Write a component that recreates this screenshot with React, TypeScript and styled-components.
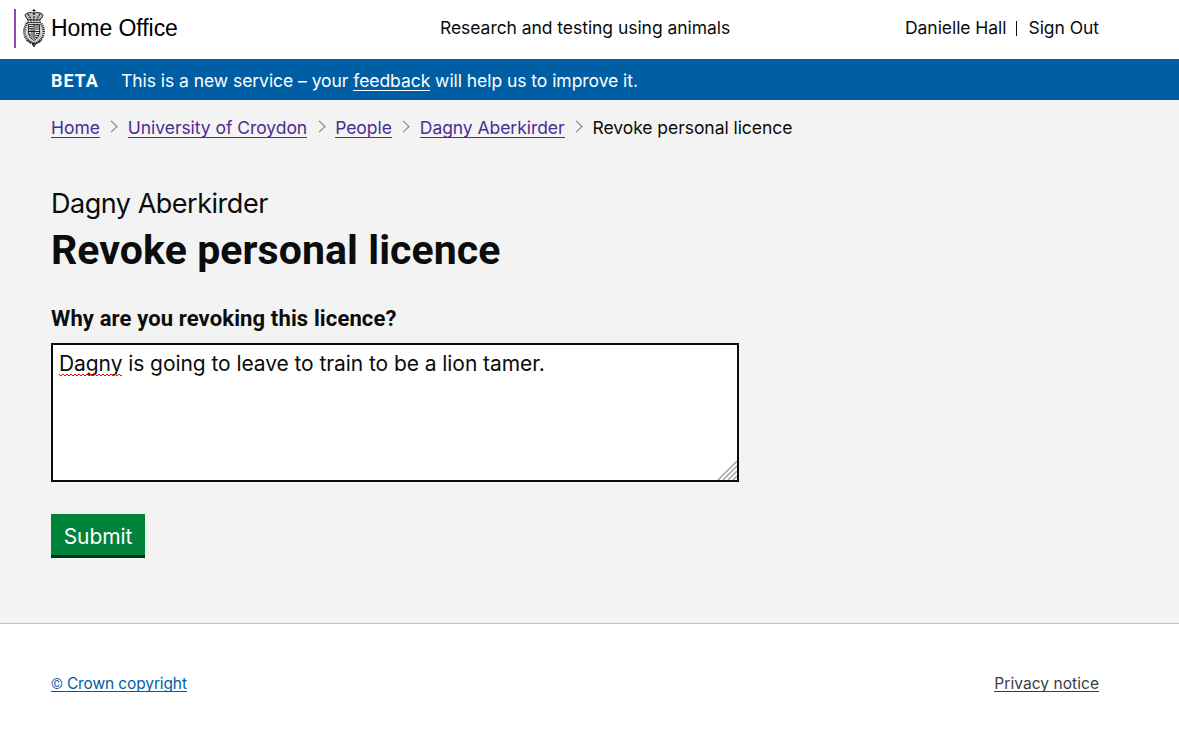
import React from 'react';
import styled, { createGlobalStyle } from 'styled-components';

const GlobalStyle = createGlobalStyle`
  * { box-sizing: border-box; }
  body { margin: 0; background: #fff; color: #0b0c0c; font-family: Inter, "Liberation Sans", sans-serif; }
`;

const Page = styled.div`
  height: 755px;
  display: flex;
  flex-direction: column;
`;

const Header = styled.header`
  height: 59px;
  display: grid;
  grid-template-columns: 440px 1fr auto;
  padding-right: 80px;
  font-size: 17.5px;
  letter-spacing: -0.05px;
  line-height: 56px;
  white-space: nowrap;
`;

const Brand = styled.div`
  display: flex;
  padding: 9px 0 0 14px;
`;

const BrandBar = styled.span`
  width: 2px;
  height: 39px;
  background: #8f4ba8;
`;

const Crest = styled.svg`
  width: 22px;
  height: 38px;
  margin-left: 7px;
`;

const BrandName = styled.span`
  margin-left: 6px;
  font-family: "Liberation Sans", Arial, sans-serif;
  font-size: 23px;
  letter-spacing: -0.05px;
  line-height: 39px;
  color: #000;
`;

const Account = styled.div`
  display: flex;
`;

const Divider = styled.span`
  width: 1px;
  height: 15px;
  margin: 21px 11px 0 10px;
  background: #0b0c0c;
`;

const PhaseBanner = styled.div`
  height: 41px;
  display: flex;
  padding-left: 51px;
  background: #005ea5;
  color: #fff;
  font-size: 17.5px;
  letter-spacing: -0.05px;
  line-height: 44px;
  white-space: nowrap;
`;

const Phase = styled.strong`
  width: 70px;
  font-family: Roboto, sans-serif;
  font-size: 18px;
  font-weight: 700;
  letter-spacing: 0.9px;
`;

const Link = styled.a<{ $color: string }>`
  color: ${(p) => p.$color};
  text-decoration: none;
  display: inline-block;
  line-height: 19px;
  border-bottom: 1px solid ${(p) => p.$color};
`;

const FooterLink = styled(Link)<{ $tracking: number }>`
  height: 18px;
  letter-spacing: ${(p) => p.$tracking}px;
`;

const CopyrightSign = styled.span`
  font-family: Roboto, sans-serif;
  font-size: 15px;
`;

const Main = styled.main`
  height: 524px;
  padding: 18px 0 0 51px;
  background: #f3f3f3;
  border-bottom: 1px solid #bfc1c3;
`;

const Breadcrumbs = styled.nav`
  height: 20px;
  display: flex;
  font-size: 17.5px;
  letter-spacing: -0.05px;
  line-height: 19px;
  white-space: nowrap;
`;

const Chevron = styled.svg`
  width: 8px;
  height: 13px;
  margin: 2px 9.500px 0 10.500px;
`;

const Caption = styled.div`
  margin-top: 46px;
  font-size: 27px;
  font-weight: 380;
  letter-spacing: -0.48px;
  line-height: 40px;
`;

const Title = styled.h1`
  margin: 0;
  height: 52px;
  font-family: Roboto, sans-serif;
  font-size: 41px;
  font-weight: 700;
  letter-spacing: 0.08px;
  line-height: 52px;
`;

const Label = styled.label`
  display: block;
  margin-top: 31px;
  font-family: Roboto, sans-serif;
  font-size: 22px;
  font-weight: 700;
  letter-spacing: 0.13px;
  line-height: 24px;
`;

const Answer = styled.div`
  width: 688px;
  height: 139px;
  margin-top: 12px;
  padding: 5px 6px;
  display: flex;
  justify-content: space-between;
  border: 2px solid #0b0c0c;
  background: #fff;
  font-size: 21px;
  letter-spacing: -0.07px;
  line-height: 28px;
`;

const Misspelt = styled.span`
  position: relative;
`;

const Squiggle = styled.svg`
  position: absolute;
  left: 0;
  bottom: -1px;
  width: 63px;
  height: 4px;
`;

const Grip = styled.svg`
  align-self: flex-end;
  width: 20px;
  height: 20px;
  margin: 0 -6px -5px 0;
`;

const Submit = styled.button`
  display: block;
  width: 94px;
  height: 44px;
  margin-top: 32px;
  padding: 4px 0 0;
  border: 0;
  border-bottom: 3px solid #003618;
  background: #00823b;
  color: #fff;
  font: 400 21px/37px Inter, sans-serif;
  letter-spacing: -0.1px;
`;

const Footer = styled.footer`
  display: flex;
  justify-content: space-between;
  padding: 50px 80px 0 51px;
  font-size: 15.5px;
  white-space: nowrap;
`;

const crumbs = ['Home', 'University of Croydon', 'People', 'Dagny Aberkirder'];

function RoyalCrest() {
  return (
    <Crest viewBox="0 0 22 38" fill="none" stroke="#202020">
      <path d="M11 0v4M9.500 1.500h3" strokeWidth="1.2" />
      <path d="M3.500 9Q0 5 5 4q4-2 6 1q2-3 6-1q5 1 1.500 5l-1.500 2H5z" fill="#bbb" strokeWidth="1" />
      <path d="M5 5l3 5M11 4v6M17 5l-3 5M4 11h14" strokeWidth="1.2" strokeDasharray="2 .9" />
      <path d="M4 13.500h14M5 12v3M8 12v3M11 12v3M14 12v3M17 12v3" strokeWidth=".8" />
      <path d="M4 14Q-1 22 3 29q3 4 8 6q5-2 8-6q4-7-1-15" fill="#d0d0d0" strokeWidth="2.400" strokeDasharray="1.100 .9" />
      <path d="M5.500 15.500h11v9q-1 5-5.500 7q-4.500-2-5.500-7z" fill="#e8e8e8" strokeWidth=".9" />
      <path d="M11 15v15M5 22.500h12" strokeWidth="1.1" />
      <path d="M6 17.500h4M6 19.500h4M7 21h3M13 16v5M15 16v5M7 24v3M9 23v6M13 24.500h3M12 26.500h4M12 28.500h2" strokeWidth=".9" />
      <path d="M3.500 31q4 3 7.500 3.500t7.500-3.500M9 35.500h4M10 37h2" strokeWidth="1.5" strokeDasharray="2.500 .7" />
    </Crest>
  );
}

export default function App() {
  return (
    <Page>
      <GlobalStyle />
      <Header>
        <Brand>
          <BrandBar />
          <RoyalCrest />
          <BrandName>Home Office</BrandName>
        </Brand>
        <span>Research and testing using animals</span>
        <Account>
          <span>Danielle Hall</span>
          <Divider />
          <span>Sign Out</span>
        </Account>
      </Header>
      <PhaseBanner>
        <Phase>BETA</Phase>
        <span>
          This is a new service – your <Link $color="#fff">feedback</Link> will help us to improve it.
        </span>
      </PhaseBanner>
      <Main>
        <Breadcrumbs>
          {crumbs.map((crumb) => (
            <React.Fragment key={crumb}>
              <Link $color="#4c2c92">{crumb}</Link>
              <Chevron viewBox="0 0 8 13" fill="none" stroke="#858889" strokeWidth="1.1">
                <path d="M1 .8L7 6.5L1 12.2" />
              </Chevron>
            </React.Fragment>
          ))}
          <span>Revoke personal licence</span>
        </Breadcrumbs>
        <Caption>Dagny Aberkirder</Caption>
        <Title>Revoke personal licence</Title>
        <Label>Why are you revoking this licence?</Label>
        <Answer>
          <span>
            <Misspelt>
              Dagny
              <Squiggle viewBox="0 0 63 4" fill="none" stroke="#f00">
                <path d={'M0 1' + 'l2 2l2-2'.repeat(16)} />
              </Squiggle>
            </Misspelt>{' '}
            is going to leave to train to be a lion tamer.
          </span>
          <Grip viewBox="0 0 20 20" stroke="#aaa" strokeWidth="1.700">
            <path d="M1 20L20 1M6 20L20 6M11 20L20 11M16 20L20 16" />
          </Grip>
        </Answer>
        <Submit>Submit</Submit>
      </Main>
      <Footer>
        <FooterLink $color="#005ea5" $tracking={-0.12}>
          <CopyrightSign>©</CopyrightSign> Crown copyright
        </FooterLink>
        <FooterLink $color="#3b3c3d" $tracking={0.06}>Privacy notice</FooterLink>
      </Footer>
    </Page>
  );
}
